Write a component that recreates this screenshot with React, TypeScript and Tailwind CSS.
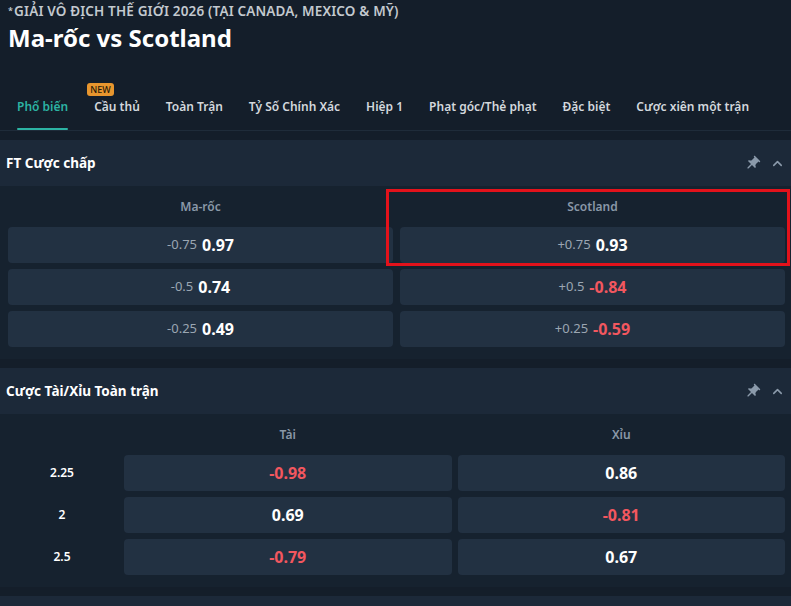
import { ChevronUp } from 'lucide-react';
import { MdPushPin } from 'react-icons/md';

const tabs = [
  'Phổ biến',
  'Cầu thủ',
  'Toàn Trận',
  'Tỷ Số Chính Xác',
  'Hiệp 1',
  'Phạt góc/Thẻ phạt',
  'Đặc biệt',
  'Cược xiên một trận',
];

const handicap = [
  { home: ['-0.75', '0.97'], away: ['+0.75', '0.93'] },
  { home: ['-0.5', '0.74'], away: ['+0.5', '-0.84'] },
  { home: ['-0.25', '0.49'], away: ['+0.25', '-0.59'] },
];

const overUnder = [
  { line: '2.25', over: '-0.98', under: '0.86' },
  { line: '2', over: '0.69', under: '-0.81' },
  { line: '2.5', over: '-0.79', under: '0.67' },
];

function Odds({ value }: { value: string }) {
  const negative = value.startsWith('-');
  return (
    <span className={`text-[16px] font-bold ${negative ? 'text-[#f2575f]' : 'text-white'}`}>{value}</span>
  );
}

function SectionHeader({ title }: { title: string }) {
  return (
    <div className="h-[46px] bg-[#1c2939] flex items-center justify-between pl-[6px] pr-[6px]">
      <h3 className="text-[13.5px] font-bold text-white">{title}</h3>
      <div className="flex items-center gap-[9px] text-[#8b9aab]">
        <MdPushPin className="w-[17px] h-[17px] rotate-45" />
        <ChevronUp className="w-[15px] h-[15px]" strokeWidth={2.5} />
      </div>
    </div>
  );
}

export default function App() {
  return (
    <div
      className="w-[791px] h-[606px] overflow-hidden bg-[#141e2a]"
      style={{ fontFamily: '"Noto Sans", "Open Sans", sans-serif' }}
    >
      {/* Match header */}
      <div className="px-2">
        <p className="h-[22px] flex items-center text-[13.5px] font-semibold text-[#c3c9cf] tracking-[0.15px]">
          <span className="text-[9px] self-start mt-[4px] mr-[1px]">*</span>
          GIẢI VÔ ĐỊCH THẾ GIỚI 2026 (TẠI CANADA, MEXICO &amp; MỸ)
        </p>
        <h1 className="h-[32px] flex items-center text-[24px] font-bold text-white">Ma-rốc vs Scotland</h1>
      </div>

      {/* Tabs */}
      <div className="mt-[30px] h-[47px] border-b border-[#1f2c3a] flex pl-[17px] gap-[26px]">
        {tabs.map((tab, i) => (
          <div key={tab} className="relative h-full flex items-center">
            <span className={`text-[12px] font-semibold ${i === 0 ? 'text-[#2cb3a3]' : 'text-[#d3d8dd]'}`}>{tab}</span>
            {i === 0 && <div className="absolute left-0 right-0 bottom-0 h-[2px] rounded-full bg-[#2cb3a3]" />}
            {i === 1 && (
              <span className="absolute -top-[1px] -left-[7px] px-[3px] h-[13px] leading-[13px] rounded-[3px] bg-[#e8962e] text-[9px] font-medium text-[#2a1a08]">
                NEW
              </span>
            )}
          </div>
        ))}
      </div>

      {/* FT handicap */}
      <div className="mt-[9px]">
        <SectionHeader title="FT Cược chấp" />
        <div className="relative bg-[#16222f] pl-2 pr-[6px] pb-3">
          <div className="grid grid-cols-2 gap-x-[7px]">
            <div className="h-[41px] flex items-center justify-center pt-[1px] text-[12px] font-semibold text-[#8a98a8]">Ma-rốc</div>
            <div className="h-[41px] flex items-center justify-center pt-[1px] text-[12px] font-semibold text-[#8a98a8]">Scotland</div>
          </div>
          <div className="grid grid-cols-2 gap-x-[7px] gap-y-[6px]">
            {handicap.map((row) => (
              <>
                <div key={row.home[0]} className="h-[36px] rounded-[4px] bg-[#223142] flex items-center justify-center gap-[5px]">
                  <span className="text-[13px] text-[#9ba6b2]">{row.home[0]}</span>
                  <Odds value={row.home[1]} />
                </div>
                <div key={row.away[0]} className="h-[36px] rounded-[4px] bg-[#223142] flex items-center justify-center gap-[5px]">
                  <span className="text-[13px] text-[#9ba6b2]">{row.away[0]}</span>
                  <Odds value={row.away[1]} />
                </div>
              </>
            ))}
          </div>
          <div className="absolute left-[386px] top-[3px] w-[404px] h-[77px] border-[3px] border-[#e3121b]" />
        </div>
      </div>

      {/* Over / under */}
      <div className="mt-[9px]">
        <SectionHeader title="Cược Tài/Xỉu Toàn trận" />
        <div className="bg-[#16222f] pr-[6px] pb-3">
          <div className="grid grid-cols-[118px_1fr_1fr] gap-x-[6px] gap-y-[6px]">
            <div className="h-[35px]" />
            <div className="h-[35px] flex items-center justify-center pt-[7px] text-[12px] font-semibold text-[#8a98a8]">Tài</div>
            <div className="h-[35px] flex items-center justify-center pt-[7px] text-[12px] font-semibold text-[#8a98a8]">Xỉu</div>
            {overUnder.map((row) => (
              <>
                <div key={row.line} className="h-[36px] flex items-center justify-center pl-[6px] text-[12px] font-semibold text-white">
                  {row.line}
                </div>
                <div className="h-[36px] rounded-[4px] bg-[#223142] flex items-center justify-center">
                  <Odds value={row.over} />
                </div>
                <div className="h-[36px] rounded-[4px] bg-[#223142] flex items-center justify-center">
                  <Odds value={row.under} />
                </div>
              </>
            ))}
          </div>
        </div>
      </div>

      <div className="mt-[9px] h-[46px] bg-[#1c2939]" />
    </div>
  );
}
